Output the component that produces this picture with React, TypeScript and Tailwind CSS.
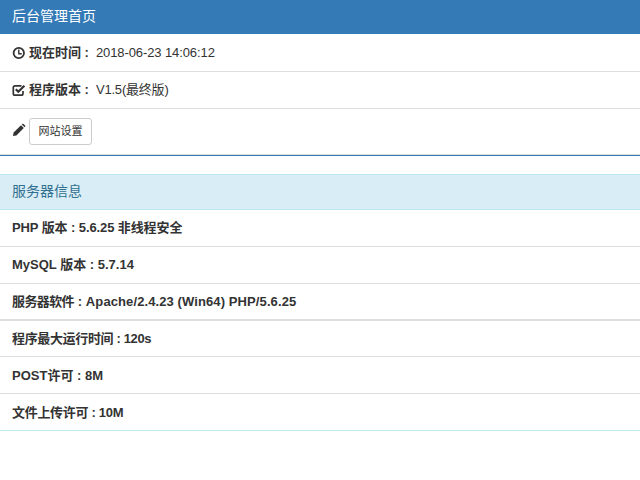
const font = { fontFamily: '"Liberation Sans", "Noto Sans CJK SC", sans-serif' };

function Clock() {
  return (
    <svg width="14" height="14" viewBox="0 0 14 14" className="mr-[3px] shrink-0">
      <circle cx="6.800" cy="7" r="5.200" fill="none" stroke="#333" strokeWidth="1.800" />
      <path d="M6.800 3.500V7.700H9.800" fill="none" stroke="#333" strokeWidth="1.400" />
    </svg>
  );
}

function Check() {
  return (
    <svg width="14" height="14" viewBox="0 0 14 14" className="mr-[3px] shrink-0">
      <path d="M11 8V10.500A1.700 1.700 0 0 1 9.300 12.200H3A1.700 1.700 0 0 1 1.300 10.500V4.500A1.700 1.700 0 0 1 3 2.800H9.500" fill="none" stroke="#333" strokeWidth="1.700" />
      <path d="M3.800 6.300L6.300 8.800L12.400 2.700" fill="none" stroke="#333" strokeWidth="2.200" />
    </svg>
  );
}

function Pencil() {
  return (
    <svg width="14" height="14" viewBox="0 0 14 14" className="mr-[3px] shrink-0 -mt-[4px]">
      <path d="M1 13L1.600 9.600L9 2.200L11.800 5L4.400 12.400Z M9.800 1.400L10.600 0.800Q11 0.500 11.500 0.900L13.100 2.500Q13.500 3 13.200 3.400L12.600 4.200Z" fill="#333" />
    </svg>
  );
}

const rowBase = "px-3 flex items-center font-bold ";

export default function App() {
  return (
    <div className="w-[640px] h-[480px] bg-white text-[#333] text-[13px] overflow-hidden" style={font}>
      <div className="h-[34px] bg-[#337ab7] text-white text-[14px] px-3 pb-[2px] flex items-center">后台管理首页</div>
      <div className="h-[38px] px-3 pt-[1px] flex items-center border-b border-[#ddd]">
        <Clock />
        <b>现在时间 :</b>
        <span className="ml-[7px] tracking-[-0.1px]">2018-06-23 14:06:12</span>
      </div>
      <div className="h-[37px] px-3 flex items-center border-b border-[#ddd]">
        <Check />
        <b>程序版本 :</b>
        <span className="ml-[7px] tracking-[-0.2px]">V1.5(最终版)</span>
      </div>
      <div className="h-[45px] px-3 flex items-center">
        <Pencil />
        <button className="h-[27px] w-[63px] border border-[#ccc] rounded-[3px] bg-white text-[11px] text-[#333]">网站设置</button>
      </div>
      <div className="h-[1px] bg-[#ddd]" />
      <div className="h-[1px] bg-[#337ab7]" />
      <div className="mt-[18px]">
        <div className="h-[36px] bg-[#d9edf7] text-[#31708f] text-[14px] px-3 pb-[2px] flex items-center border-t border-b border-[#bce8f1]">服务器信息</div>
        <div className={rowBase + "h-[37px] border-b border-[#ddd] tracking-[-0.1px]"}>PHP 版本 : 5.6.25 非线程安全</div>
        <div className={rowBase + "h-[37px] border-b border-[#ddd]"}>MySQL 版本 : 5.7.14</div>
        <div className={rowBase + "h-[37px] border-b-2 border-[#ddd]"}>
          <div>
            <span className="tracking-[-0.6px]">服务器软件</span>
            <span className="tracking-[0.1px]"> : Apache/2.4.23 (Win64) PHP/5.6.25</span>
          </div>
        </div>
        <div className={rowBase + "h-[36px] border-b border-[#ddd] tracking-[-0.35px]"}>程序最大运行时间 : 120s</div>
        <div className={rowBase + "h-[37px] pt-[1px] border-b border-[#ddd]"}>POST许可 : 8M</div>
        <div className={rowBase + "h-[37px] pt-[1px] border-b border-[#bce8f1] tracking-[-0.3px]"}>文件上传许可 : 10M</div>
      </div>
    </div>
  );
}
